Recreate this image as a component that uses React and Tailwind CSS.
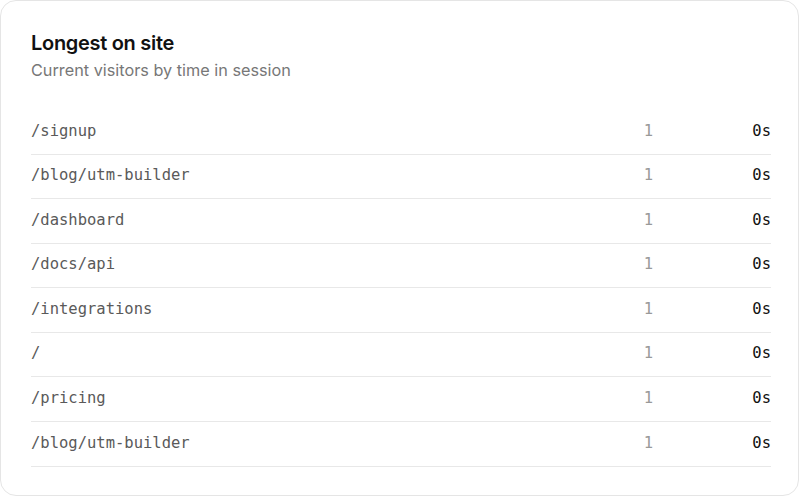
// App.jsx
const rows = [
  { path: "/signup", count: 1, time: "0s" },
  { path: "/blog/utm-builder", count: 1, time: "0s" },
  { path: "/dashboard", count: 1, time: "0s" },
  { path: "/docs/api", count: 1, time: "0s" },
  { path: "/integrations", count: 1, time: "0s" },
  { path: "/", count: 1, time: "0s" },
  { path: "/pricing", count: 1, time: "0s" },
  { path: "/blog/utm-builder", count: 1, time: "0s" },
];

export default function App() {
  return (
    <div className="w-[800px] h-[498px] bg-white pr-px pb-[2px] font-['Inter',sans-serif]">
      <div className="h-full rounded-2xl border border-[#e5e5e5] bg-white pl-[30px] pr-[27px] pt-[26px]">
        {/* header */}
        <h2 className="text-[20px] leading-8 font-semibold tracking-[-0.015em] text-[#111]">
          Longest on site
        </h2>
        <p className="-mt-px text-[16.25px] leading-6 text-[#777]">
          Current visitors by time in session
        </p>

        {/* list */}
        <div className="mt-[28px] font-['DejaVu_Sans_Mono',monospace] text-[15.5px]">
          {rows.map((r, i) => (
            <div
              key={i}
              className="flex h-[44.57px] items-center border-b border-[#e8e8e8] pb-px"
            >
              <span className="flex-1 text-[#5a5a5a]">{r.path}</span>
              <span className="text-right text-[#999]">{r.count}</span>
              <span className="w-[118px] text-right text-[#111]">{r.time}</span>
            </div>
          ))}
        </div>
      </div>
    </div>
  );
}
